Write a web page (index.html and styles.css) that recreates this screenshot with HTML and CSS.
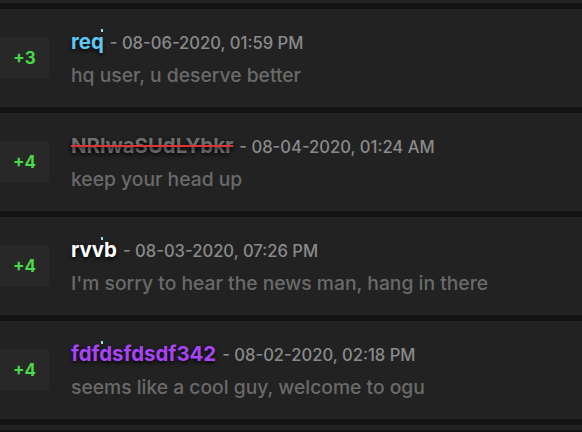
FILE: index.html
```html
<!DOCTYPE html>
<html lang="en">
<head>
  <meta charset="UTF-8">
  <meta name="viewport" content="width=device-width, initial-scale=1.0">
  <title>Reputation</title>
  <link rel="stylesheet" href="styles.css">
</head>
<body>
  <div class="rep-list">
    <div class="rep-row rep-row-cut"></div>

    <div class="rep-row">
      <div class="rep-score">+3</div>
      <div class="rep-body">
        <div class="rep-head">
          <span class="rep-user user-blue">req<span class="sparkle"></span></span>
          <span class="rep-date">- 08-06-2020, 01:59 PM</span>
        </div>
        <div class="rep-msg">hq user, u deserve better</div>
      </div>
    </div>

    <div class="rep-row">
      <div class="rep-score">+4</div>
      <div class="rep-body">
        <div class="rep-head">
          <span class="rep-user user-banned">NRlwaSUdLYbkr</span>
          <span class="rep-date">- 08-04-2020, 01:24 AM</span>
        </div>
        <div class="rep-msg">keep your head up</div>
      </div>
    </div>

    <div class="rep-row">
      <div class="rep-score">+4</div>
      <div class="rep-body">
        <div class="rep-head">
          <span class="rep-user user-white">rvvb<span class="sparkle"></span></span>
          <span class="rep-date">- 08-03-2020, 07:26 PM</span>
        </div>
        <div class="rep-msg">I'm sorry to hear the news man, hang in there</div>
      </div>
    </div>

    <div class="rep-row">
      <div class="rep-score">+4</div>
      <div class="rep-body">
        <div class="rep-head">
          <span class="rep-user user-purple">fdfdsfdsdf342<span class="sparkle"></span></span>
          <span class="rep-date">- 08-02-2020, 02:18 PM</span>
        </div>
        <div class="rep-msg">seems like a cool guy, welcome to ogu</div>
      </div>
    </div>

    <div class="rep-row rep-row-end"></div>
  </div>
</body>
</html>
```

FILE: styles.css
```css
body {
  margin: 0;
  background-color: #141414;
  font-family: Inter, 'Noto Sans', sans-serif;
  overflow: hidden;
  height: 432px;
}
.rep-list {
  display: flex;
  flex-direction: column;
  gap: 6px;
}
.rep-row {
  display: flex;
  align-items: center;
  height: 98px;
  flex-shrink: 0;
  background-color: #222222;
}
.rep-row-cut {
  height: 3px;
}
.rep-row-end {
  height: 5px;
}
.rep-score {
  width: 49px;
  height: 42px;
  display: flex;
  align-items: center;
  justify-content: center;
  background-color: #282828;
  border-radius: 0 3px 3px 0;
  color: #48d848;
  font-size: 17px;
  font-weight: 700;
}
.rep-body {
  padding-left: 22px;
  display: flex;
  flex-direction: column;
  gap: 9px;
}
.rep-head {
  display: flex;
  align-items: baseline;
  gap: 6px;
}
.rep-user {
  position: relative;
  font-size: 20.4px;
  font-weight: 700;
  text-shadow: 0 2px 4px rgba(0,0,0,0.9);
}
.user-blue {
  color: #62c6f2;
}
.user-white {
  color: #ffffff;
}
.user-purple {
  color: #a844f5;
}
.user-banned {
  color: #707070;
  text-decoration: line-through;
  text-decoration-color: #dd3535;
  text-decoration-thickness: 2px;
}
.sparkle {
  position: absolute;
  top: 0;
  left: 30px;
  width: 2px;
  height: 3px;
  background-color: #a0d8f0;
}
.rep-date {
  font-size: 16.6px;
  font-weight: 500;
  color: #8a8a8a;
}
.rep-msg {
  font-size: 19.3px;
  font-weight: 500;
  color: #6a6a6a;
}
```
